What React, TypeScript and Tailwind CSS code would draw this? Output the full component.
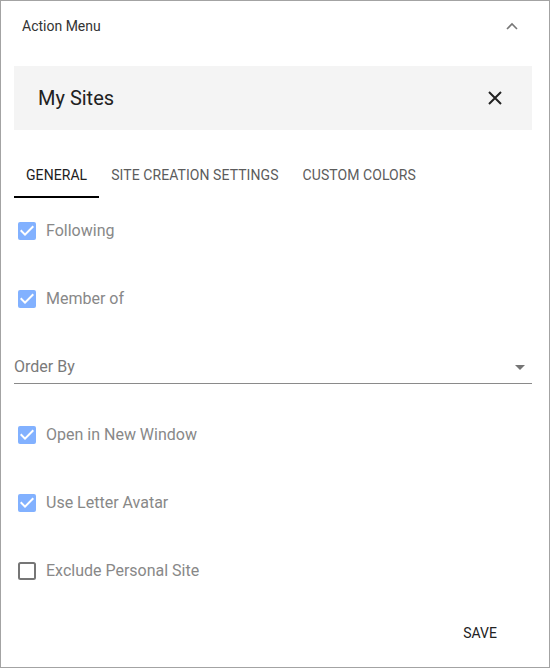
const rows = [
  { kind: "check", label: "Following", checked: true },
  { kind: "check", label: "Member of", checked: true },
  { kind: "select", label: "Order By" },
  { kind: "check", label: "Open in New Window", checked: true },
  { kind: "check", label: "Use Letter Avatar", checked: true },
  { kind: "check", label: "Exclude Personal Site", checked: false },
];

const tabs = ["General", "Site Creation Settings", "Custom Colors"];

function Check({ checked }: { checked: boolean }) {
  return (
    <svg width="24" height="24" viewBox="0 0 24 24">
      {checked ? (
        <>
          <rect x="3" y="3" width="18" height="18" rx="2" fill="#82b1ff" />
          <path d="M10 17l-5-5 1.41-1.41L10 14.17l7.59-7.59L19 8l-9 9z" fill="#fff" />
        </>
      ) : (
        <rect x="4" y="4" width="16" height="16" rx="1.5" fill="none" stroke="#767676" strokeWidth="2" />
      )}
    </svg>
  );
}

export default function App() {
  return (
    <div className="box-border h-[668px] w-[550px] border border-[#a3a3a3] bg-white font-['Roboto',sans-serif]">
      <div className="flex h-[50px] items-center justify-between pl-[21px] pr-[31px]">
        <span className="text-[14px] text-[#333]">Action Menu</span>
        <svg width="12" height="8" viewBox="0 0 12 8" fill="none">
          <path d="M1 7l5-5 5 5" stroke="#777" strokeWidth="1.6" />
        </svg>
      </div>

      <div className="pl-[13px] pr-[17px]">
        <div className="mt-[15px] flex h-[64px] items-center justify-between bg-[#f4f4f4] pl-[24px] pr-[30px]">
          <span className="text-[20px] text-[#212121]">My Sites</span>
          <svg width="14" height="14" viewBox="0 0 14 14" fill="none">
            <path d="M1 1l12 12M13 1L1 13" stroke="#222" strokeWidth="2" />
          </svg>
        </div>

        <div className="mt-[20px] flex h-[48px]">
          {tabs.map((t, i) => (
            <div
              key={t}
              className={
                i === 0
                  ? "flex items-center border-b-2 border-black px-[12px] pt-[4px] text-[14px] uppercase tracking-[0.07px] text-[#212121]"
                  : "flex items-center border-b-2 border-transparent px-[12px] pt-[4px] text-[14px] uppercase tracking-[0.07px] text-[#5c5c5c]"
              }
            >
              {t}
            </div>
          ))}
        </div>

        <div className="mt-[9px] flex flex-col gap-[20px]">
          {rows.map((r) =>
            r.kind === "check" ? (
              <div key={r.label} className="flex h-[48px] items-center">
                <div className="ml-[1px]">
                  <Check checked={!!r.checked} />
                </div>
                <span className="ml-[7px] text-[16px] text-[#888]">{r.label}</span>
              </div>
            ) : (
              <div key={r.label} className="h-[48px]">
                <div className="mt-[11px] flex h-[30px] items-start justify-between border-b border-[#8a8a8a]">
                  <span className="pt-[1px] text-[16px] leading-[24px] text-[#7a7a7a]">{r.label}</span>
                  <svg className="mr-[7px] mt-[11px]" width="10" height="5" viewBox="0 0 10 5">
                    <path d="M0 0h10L5 5z" fill="#757575" />
                  </svg>
                </div>
              </div>
            )
          )}
        </div>

        <div className="mt-[20px] flex justify-end">
          <button className="mr-[19px] h-[36px] px-[16px] text-[14px] font-normal uppercase text-[#222]">
            Save
          </button>
        </div>
      </div>
    </div>
  );
}
